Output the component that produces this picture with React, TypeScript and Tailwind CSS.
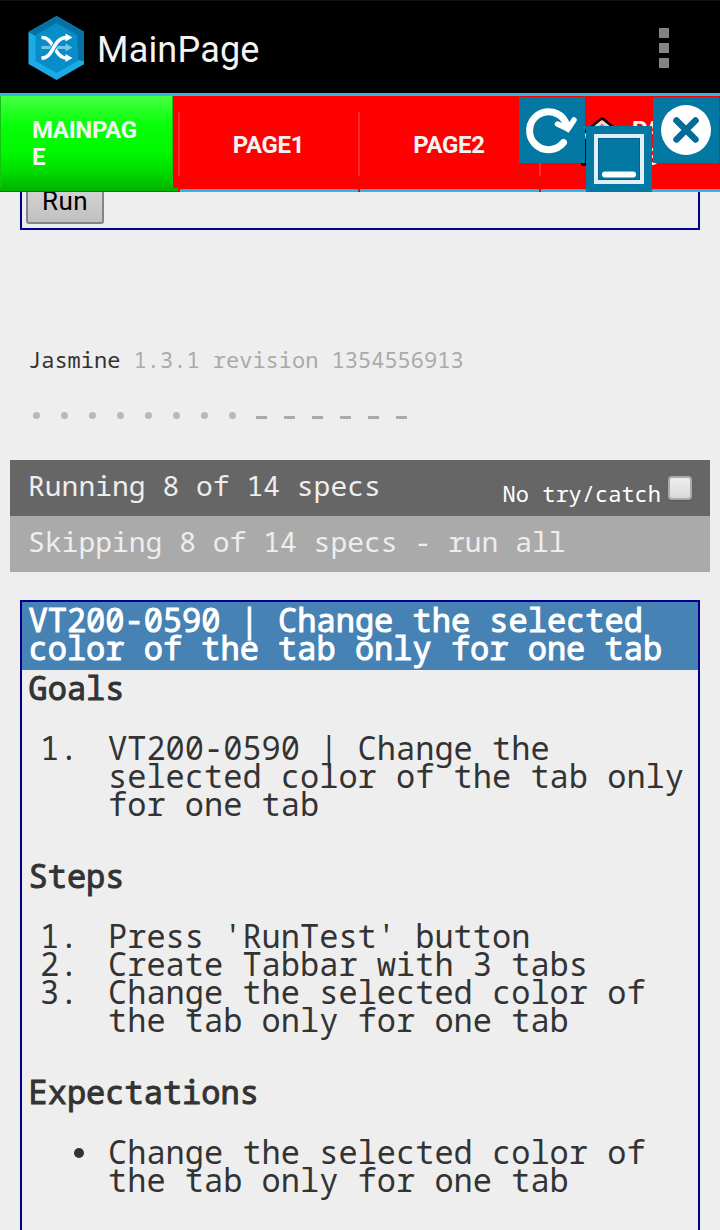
import type { ReactNode } from "react";

function Logo() {
  return (
    <svg className="mt-0.5 h-16 w-14" viewBox="-0.5 0 56 64">
      <path d="M28 0 56 16V48L28 64 0 48V16Z" fill="#1cabe4" />
      <path d="M28 0 56 16V45L49 44 49 32 7 20 0 16Z" fill="#0672a3" />
      <path d="M28 7 49 19V45L28 57 7 45V19Z" fill="#078dc8" />
      <path d="M13 31.500H38" stroke="#77c4e6" strokeWidth="3" />
      <path d="M37 27.500 44 31.500 37 35.500Z" fill="#77c4e6" />
      <g fill="none" strokeWidth="3.600">
        <path d="M13 21.500C25 20.500 26 42 38 42" stroke="#fff" />
        <path d="M13 42C26 42 24 21.500 38 21.500" stroke="#078dc8" strokeWidth="5.500" />
        <path d="M13 42C26 42 24 21.500 38 21.500" stroke="#fff" />
      </g>
      <path d="M37 17.500 44 21.500 37 25.500ZM37 38 44 42 37 46Z" fill="#fff" />
    </svg>
  );
}

const tabText = "text-[24px] font-bold tracking-[-0.35px] text-[#f3f3f3]";

function Tab({ children, width, last }: { children: ReactNode; width: string; last?: boolean }) {
  return (
    <div className={`flex h-24 shrink-0 flex-col ${width}`}>
      <div className={`relative flex flex-1 items-center justify-center pt-1 pr-[3px] ${tabText}`}>
        {children}
        {!last && <div className="absolute top-4 right-0 h-16 w-0.5 bg-[#ff2b2b]" />}
      </div>
      <div className={last ? "h-[3px] border-t border-[#7d8a91] bg-[#33b5e5]" : "mr-0.5 h-[3px] border-t border-[#7d8a91] bg-[#33b5e5]"} />
    </div>
  );
}

const mono = "font-['Droid_Sans_Mono','Noto_Sans_Mono','DejaVu_Sans_Mono',monospace]";

function Heading({ children }: { children: ReactNode }) {
  return <h2 className="pl-[6.5px] font-normal [-webkit-text-stroke:1px_#333]">{children}</h2>;
}

function Item({ mark, children }: { mark: ReactNode; children: ReactNode }) {
  return (
    <li className="flex pl-[18px]">
      <span className="w-[68px] shrink-0">{mark}</span>
      <span className="whitespace-nowrap">{children}</span>
    </li>
  );
}

export default function App() {
  return (
    <div className="h-[1230px] w-[720px] overflow-hidden bg-[#eee] font-[Roboto,sans-serif]">
      <header className="flex h-24 items-center border-t border-b-[3px] border-t-[#111] border-b-[#33b5e5] bg-black pl-7">
        <Logo />
        <h1 className="mt-1.5 ml-[13px] text-[36px] tracking-[0.2px] text-[#f3f3f3]">MainPage</h1>
        <div className="mt-0.5 mr-[51px] ml-auto flex flex-col gap-[5px]">
          <i className="size-2.5 bg-[#848484]" />
          <i className="size-2.5 bg-[#848484]" />
          <i className="size-2.5 bg-[#848484]" />
        </div>
      </header>

      <nav className="relative flex h-24 bg-[#f00]">
        <div className="relative flex h-24 w-[180px] shrink-0 flex-col">
          <div className={`flex h-[92px] w-[173px] items-center border-x border-[#12c312] bg-[linear-gradient(#45ff45,#0aff0a_30%,#00f800_60%,#00e000_80%,#00b800)] pt-1 pl-[31px] leading-[27px] ${tabText}`}>
            <span>MAINPAG<br />E</span>
          </div>
          <div className="h-[3px] w-[178px] bg-[#00b400]" />
          <div className="absolute top-4 right-0 h-16 w-0.5 bg-[#ff2b2b]" />
        </div>
        <Tab width="w-[180px]">PAGE1</Tab>
        <Tab width="w-[181px]">PAGE2</Tab>
        <Tab width="w-[179px]" last>
          <svg className="absolute top-[20px] left-[37px] h-16 w-12" viewBox="0 0 48 64">
            <path d="M24 2 46 21V50H6V21L2 21Z" fill="#ff4f9a" />
            <path d="M6 23V50" stroke="#200" strokeWidth="6" />
            <path d="M24 5.500 43 20M24 5.500 5 20" stroke="#ddd" strokeWidth="3.500" />
            <path d="M24 2 44 18.500M24 2 4 18.500" stroke="#200" strokeWidth="2.500" />
          </svg>
          <span className="absolute top-[21px] left-[91px] leading-[27px]">PAG<br />E3</span>
        </Tab>
        <div className="absolute top-[1px] left-[519px] size-[66px] bg-[#0378a3]">
          <svg className="size-[66px]" viewBox="0 0 66 66" fill="none" stroke="#fff" strokeLinecap="round">
            <path d="M44.500 45.500A19 19 0 1 1 46.500 25" strokeWidth="7" />
            <path d="M38.500 27 49 32 55 23" strokeWidth="5.500" strokeLinejoin="round" />
            <path d="M38 26 54 25 49.500 36Z" fill="#fff" stroke="none" />
          </svg>
        </div>
        <div className="absolute top-[30px] left-[586px] size-[66px] bg-[#0378a3]">
          <svg className="size-[66px]" viewBox="0 0 66 66" fill="none">
            <rect x="10" y="10" width="46" height="46" stroke="#e0eff5" strokeWidth="4" />
            <rect x="12.500" y="12.500" width="41" height="41" stroke="#055f8c" strokeWidth="1" />
            <path d="M19 48.500H47" stroke="#fff" strokeWidth="6" strokeLinecap="round" />
          </svg>
        </div>
        <div className="absolute top-[1px] left-[653px] h-[66px] w-[66px] bg-[#0378a3]">
          <svg className="size-[66px]" viewBox="0 0 66 66">
            <circle cx="33" cy="33" r="25" fill="#fff" />
            <path d="M23.500 23.500 42.500 42.500M42.500 23.500 23.500 42.500" stroke="#046c98" strokeWidth="6.500" strokeLinecap="round" />
          </svg>
        </div>
      </nav>

      <section className="mx-5 h-[38px] overflow-hidden border-x-2 border-b-2 border-[#00008b] pl-1">
        <div className="flex h-8 w-[78px] justify-center rounded-b-[3px] border-2 border-t-0 border-[#848484] bg-linear-to-b from-[#d2d2d2] to-[#c0c0c0] text-[26px] leading-[19px] tracking-[0.4px] text-black">
          Run
        </div>
      </section>

      <main className={`${mono} text-[#333]`}>
        <p className="mt-[115px] pl-7 text-[22px] leading-7 whitespace-pre">Jasmine <span className="text-[#aaa]">1.3.1 revision 1354556913</span></p>
        <div className="mt-7 flex h-7 pl-[28px] text-[#aaa]">
          {Array.from({ length: 8 }, (_, i) => (
            <span key={i} className="flex w-7 items-center pt-px pl-[5px]"><i className="h-[7px] w-[7px] rounded-full bg-[#b9b9b9]" /></span>
          ))}
          {Array.from({ length: 6 }, (_, i) => (
            <span key={i} className="flex w-7 items-center pt-[5px] pl-[4px]"><i className="h-[3px] w-[11px] bg-[#aaa]" /></span>
          ))}
        </div>
        <div className="mx-2.5 mt-[31px] flex h-14 justify-between bg-[#666] pl-[18px] text-[28px] leading-[50px] text-[#eee]">
          <span>Running 8 of 14 specs</span>
          <label className="flex pr-[18px] text-[22px] text-white">
            <span className="pt-[8px]">No try/catch</span>
            <i className="mt-4 ml-[7px] h-6 w-6 rounded-[4px] border-2 border-[#aaa] bg-linear-to-b from-[#eee] to-[#dadada] shadow-[0_1px_1px_#555]" />
          </label>
        </div>
        <div className="mx-2.5 h-14 bg-[#aaa] pl-[18px] text-[28px] leading-[50px] text-[#eee]">Skipping 8 of 14 specs - run all</div>

        <article className="mx-5 mt-7 h-[640px] border-2 border-[#00008b] text-[32px] leading-7">
          <h2 className="h-[68px] bg-[#4682b4] pt-1 pl-[6.5px] font-normal whitespace-nowrap text-white [-webkit-text-stroke:1px_#fff]">
            VT200-0590 | Change the selected<br />color of the tab only for one tab
          </h2>
          <div className="pt-1">
            <Heading>Goals</Heading>
            <ol className="mt-8 mb-11">
              <Item mark="1.">VT200-0590 | Change the<br />selected color of the tab only<br />for one tab</Item>
            </ol>
            <Heading>Steps</Heading>
            <ol className="mt-8 mb-11">
              <Item mark="1.">Press 'RunTest' button</Item>
              <Item mark="2.">Create Tabbar with 3 tabs</Item>
              <Item mark="3.">Change the selected color of<br />the tab only for one tab</Item>
            </ol>
            <Heading>Expectations</Heading>
            <ul className="mt-8">
              <Item mark={<i className="mt-[10px] ml-[34px] block size-2.5 rounded-full bg-[#333]" />}>Change the selected color of<br />the tab only for one tab</Item>
            </ul>
          </div>
        </article>
      </main>
    </div>
  );
}
